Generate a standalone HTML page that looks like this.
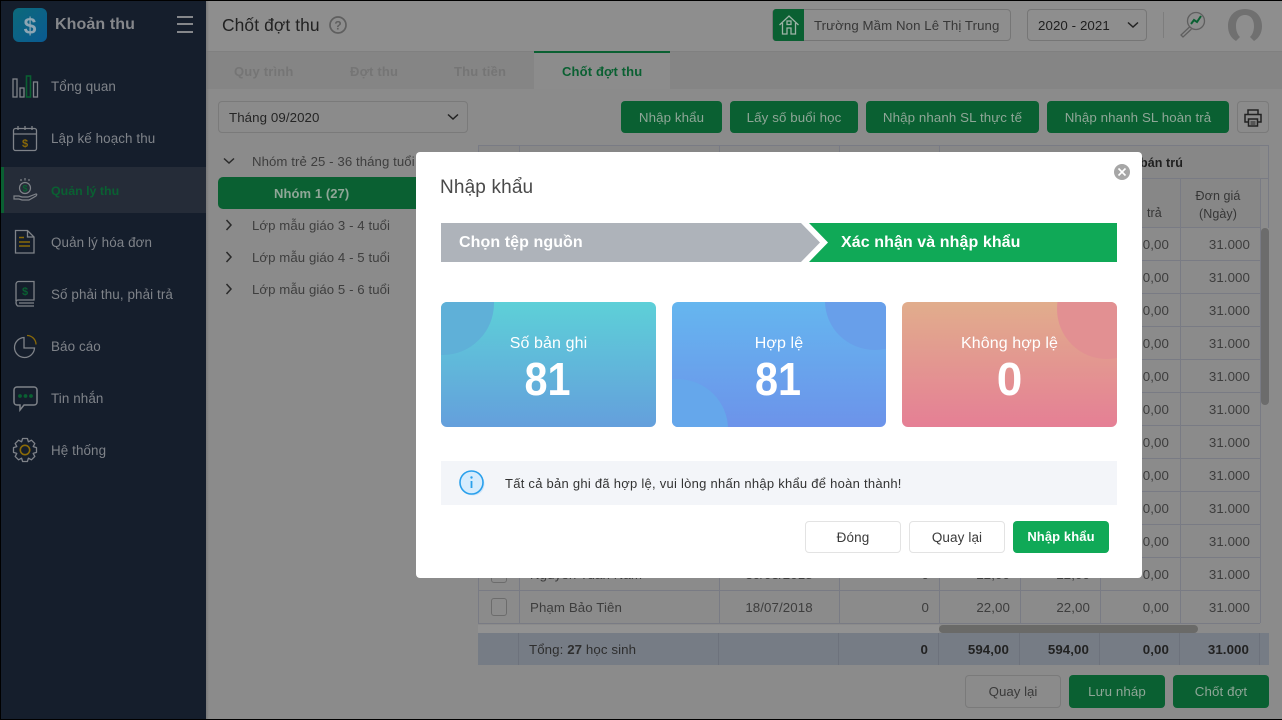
<!DOCTYPE html>
<html lang="vi"><head><meta charset="utf-8"><title>Chốt đợt thu</title>
<style>
*{box-sizing:border-box}
html,body{margin:0;padding:0;width:1282px;height:720px;overflow:hidden;background:#8b8b8b;font-family:"Liberation Sans",sans-serif}
.a{position:absolute}
.t{position:absolute;white-space:nowrap;line-height:20px;font-size:13.3px;letter-spacing:.08px;margin-top:1px}
.c{transform:translateX(-50%)}
.r{transform:translateX(-100%)}
.side{color:#7f8389;font-size:13.4px;letter-spacing:.1px;margin-top:1px}
.gb{position:absolute;background:#0a6032;border-radius:4px;color:#8fa697;font-size:13.3px;text-align:center;letter-spacing:.1px}
.wb{position:absolute;border:1px solid #7a7a7a;border-radius:4px;color:#333}
.tree{color:#3e3e3e;font-size:13.2px}
.v{position:absolute;background:#797b84;width:1px}
.h{position:absolute;background:#797b84;height:1px}
.cell{color:#3d3d3d}
.card{position:absolute;top:302px;height:125px;border-radius:6px;overflow:hidden;color:#fff;text-align:center}
.card b{position:absolute;left:0;right:0;top:52px;font-size:46px;line-height:50px;transform:translateX(-1px) scaleX(.9)}
.card span{position:absolute;left:0;right:0;top:32px;font-size:16px;line-height:20px;letter-spacing:.1px}
.card i{position:absolute;display:block}
.mb{position:absolute;top:521px;height:32px;border-radius:4px;text-align:center;line-height:31px;font-size:13.5px;letter-spacing:.1px}
</style></head><body>

<!-- top bar -->
<div class="a" style="left:206px;top:0;width:1076px;height:51px;background:#8e8e8e"></div>
<div class="a" style="left:206px;top:51px;width:1076px;height:38px;background:#858585"></div>
<div class="a" style="left:206px;top:51px;width:1076px;height:1px;background:#808080"></div>
<div class="t" style="left:222px;top:14px;font-size:17.4px;color:#222;letter-spacing:.1px">Chốt đợt thu</div>
<svg class="a" style="left:328px;top:15px" width="20" height="20"><circle cx="10" cy="10" r="8" fill="none" stroke="#5f5f5f" stroke-width="1.7"/><text x="10" y="14.5" text-anchor="middle" font-size="12" font-weight="700" fill="#5f5f5f" font-family="Liberation Sans">?</text></svg>

<div class="a" style="left:772px;top:9px;width:239px;height:32px;border:1px solid #767676;border-radius:4px"></div>
<div class="a" style="left:773px;top:9px;width:31px;height:32px;background:#0a6032;border-radius:3px 0 0 3px"></div>
<svg class="a" style="left:778px;top:14px" width="22" height="22" fill="none" stroke="#9db3a6" stroke-width="1.3"><path d="M1.5 11 11 2l9.5 9M4.5 9v11h4.5v-6h4v6h4.5V9"/><rect x="9" y="7" width="4" height="3.5"/></svg>
<div class="t" style="left:814px;top:15px;color:#383838;font-size:13.25px">Trường Mầm Non Lê Thị Trung</div>

<div class="a" style="left:1027px;top:9px;width:120px;height:32px;border:1px solid #767676;border-radius:4px"></div>
<div class="t" style="left:1038px;top:15px;color:#1f1f1f">2020 - 2021</div>
<svg class="a" style="left:1126px;top:20px" width="14" height="10" fill="none" stroke="#222" stroke-width="1.5"><path d="M2 2.5 7 7l5-4.5"/></svg>
<div class="a" style="left:1163px;top:12px;width:1px;height:26px;background:#7d7d7d"></div>
<svg class="a" style="left:1178px;top:9px" width="32" height="30" fill="none"><circle cx="18" cy="12" r="8.5" stroke="#5f5f5f" stroke-width="1.3"/><path d="M13 15l3-4 3 2 4-6" stroke="#0a6032" stroke-width="2"/><path d="M11.5 18 3 26l2 2 8.5-8" stroke="#5f5f5f" stroke-width="1.3"/></svg>
<svg class="a" style="left:1227px;top:8px" width="36" height="35"><path d="M18 1C8 1 1 8 1 18c0 7 3 12 8 15l4-4c-3-3-4-7-4-11 0-6 3-11 9-11s9 5 9 11c0 4-1 8-4 11l4 4c5-3 8-8 8-15C35 8 28 1 18 1z" fill="#707070"/></svg>

<!-- tabs -->
<div class="t" style="left:234px;top:61px;font-weight:700;color:#757575;font-size:13px;letter-spacing:.2px">Quy trình</div>
<div class="t" style="left:350px;top:61px;font-weight:700;color:#757575;font-size:13px;letter-spacing:.2px">Đợt thu</div>
<div class="t" style="left:454px;top:61px;font-weight:700;color:#757575;font-size:13px;letter-spacing:.2px">Thu tiền</div>
<div class="a" style="left:534px;top:51px;width:136px;height:38px;background:#8c8c8c;border-top:2px solid #0a6032"></div>
<div class="t" style="left:562px;top:61px;font-weight:700;color:#0a6032;font-size:13px;letter-spacing:.15px">Chốt đợt thu</div>

<!-- left select + tree -->
<div class="a" style="left:218px;top:101px;width:250px;height:32px;border:1px solid #7a7a7a;border-radius:4px"></div>
<div class="t" style="left:229px;top:107px;color:#252525">Tháng 09/2020</div>
<svg class="a" style="left:446px;top:112px" width="14" height="10" fill="none" stroke="#222" stroke-width="1.5"><path d="M2 2.5 7 7l5-4.5"/></svg>

<svg class="a" style="left:222px;top:156px" width="14" height="10" fill="none" stroke="#2a2a2a" stroke-width="1.5"><path d="M2 2.5 7 7l5-4.5"/></svg>
<div class="t tree" style="left:252px;top:151px">Nhóm trẻ 25 - 36 tháng tuổi</div>
<div class="a" style="left:218px;top:177px;width:210px;height:32px;background:#0a6032;border-radius:5px"></div>
<div class="t" style="left:274px;top:183px;color:#8fa697;font-weight:700;font-size:13px">Nhóm 1 (27)</div>
<svg class="a" style="left:224px;top:218px" width="10" height="14" fill="none" stroke="#2a2a2a" stroke-width="1.5"><path d="M2.5 2 7 7l-4.5 5"/></svg>
<div class="t tree" style="left:252px;top:215px">Lớp mẫu giáo 3 - 4 tuổi</div>
<svg class="a" style="left:224px;top:250px" width="10" height="14" fill="none" stroke="#2a2a2a" stroke-width="1.5"><path d="M2.5 2 7 7l-4.5 5"/></svg>
<div class="t tree" style="left:252px;top:247px">Lớp mẫu giáo 4 - 5 tuổi</div>
<svg class="a" style="left:224px;top:282px" width="10" height="14" fill="none" stroke="#2a2a2a" stroke-width="1.5"><path d="M2.5 2 7 7l-4.5 5"/></svg>
<div class="t tree" style="left:252px;top:279px">Lớp mẫu giáo 5 - 6 tuổi</div>

<!-- toolbar -->
<div class="gb" style="left:621px;top:101px;width:101px;height:32px;line-height:34px">Nhập khẩu</div>
<div class="gb" style="left:730px;top:101px;width:128px;height:32px;line-height:34px">Lấy số buổi học</div>
<div class="gb" style="left:866px;top:101px;width:173px;height:32px;line-height:34px">Nhập nhanh SL thực tế</div>
<div class="gb" style="left:1047px;top:101px;width:182px;height:32px;line-height:34px">Nhập nhanh SL hoàn trả</div>
<div class="wb" style="left:1237px;top:101px;width:32px;height:32px"></div>
<svg class="a" style="left:1243px;top:108px" width="20" height="20" fill="none" stroke="#222" stroke-width="1.5"><path d="M5 6V2h10v4M5 14H2V6.5h16V14h-3"/><rect x="5.5" y="11" width="9" height="7"/><path d="M7.5 14h5M7.5 16h5" stroke-width="1"/></svg>

<!-- table -->
<div class="a" style="left:478px;top:145px;width:782px;height:83px;background:#878787"></div>
<div class="h" style="left:478px;top:145px;width:791px"></div>
<div class="h" style="left:1142px;top:178px;width:127px"></div>
<div class="h" style="left:478px;top:227px;width:782px"></div>
<div class="v" style="left:1180px;top:178px;height:49px"></div>
<div class="v" style="left:1260px;top:178px;height:49px"></div>
<div class="v" style="left:1268px;top:145px;height:83px"></div>
<div class="v" style="left:478px;top:145px;height:7px"></div>
<div class="v" style="left:519px;top:145px;height:7px"></div>
<div class="v" style="left:719px;top:145px;height:7px"></div>
<div class="v" style="left:839px;top:145px;height:7px"></div>
<div class="v" style="left:939px;top:145px;height:7px"></div>
<div class="t" style="left:1140px;top:152px;font-weight:700;color:#1f1f1f;font-size:12.5px">bán trú</div>
<div class="t" style="left:1147px;top:202px;color:#363636;font-size:12.5px">trả</div>
<div class="t c" style="left:1218px;top:185px;color:#363636;font-size:12.5px">Đơn giá</div>
<div class="t c" style="left:1218px;top:203px;color:#363636;font-size:12.5px">(Ngày)</div>

<div class="v" style="left:1180px;top:227px;height:396px"></div>
<div class="v" style="left:1260px;top:227px;height:396px"></div>
<div class="h" style="left:1142px;top:260px;width:118px"></div>
<div class="h" style="left:1142px;top:293px;width:118px"></div>
<div class="h" style="left:1142px;top:326px;width:118px"></div>
<div class="h" style="left:1142px;top:359px;width:118px"></div>
<div class="h" style="left:1142px;top:392px;width:118px"></div>
<div class="h" style="left:1142px;top:425px;width:118px"></div>
<div class="h" style="left:1142px;top:458px;width:118px"></div>
<div class="h" style="left:1142px;top:491px;width:118px"></div>
<div class="h" style="left:1142px;top:524px;width:118px"></div>
<div class="h" style="left:1142px;top:557px;width:118px"></div>
<div class="h" style="left:478px;top:590px;width:782px"></div>
<div class="h" style="left:478px;top:623px;width:782px"></div>
<div class="v" style="left:478px;top:578px;height:46px"></div>
<div class="v" style="left:519px;top:578px;height:46px"></div>
<div class="v" style="left:719px;top:578px;height:46px"></div>
<div class="v" style="left:839px;top:578px;height:46px"></div>
<div class="v" style="left:939px;top:578px;height:46px"></div>
<div class="v" style="left:1020px;top:578px;height:46px"></div>
<div class="v" style="left:1100px;top:578px;height:46px"></div>

<div class="t cell r" style="left:1169px;top:234px">0,00</div><div class="t cell r" style="left:1250px;top:234px">31.000</div>
<div class="t cell r" style="left:1169px;top:267px">0,00</div><div class="t cell r" style="left:1250px;top:267px">31.000</div>
<div class="t cell r" style="left:1169px;top:300px">0,00</div><div class="t cell r" style="left:1250px;top:300px">31.000</div>
<div class="t cell r" style="left:1169px;top:333px">0,00</div><div class="t cell r" style="left:1250px;top:333px">31.000</div>
<div class="t cell r" style="left:1169px;top:366px">0,00</div><div class="t cell r" style="left:1250px;top:366px">31.000</div>
<div class="t cell r" style="left:1169px;top:399px">0,00</div><div class="t cell r" style="left:1250px;top:399px">31.000</div>
<div class="t cell r" style="left:1169px;top:432px">0,00</div><div class="t cell r" style="left:1250px;top:432px">31.000</div>
<div class="t cell r" style="left:1169px;top:465px">0,00</div><div class="t cell r" style="left:1250px;top:465px">31.000</div>
<div class="t cell r" style="left:1169px;top:498px">0,00</div><div class="t cell r" style="left:1250px;top:498px">31.000</div>
<div class="t cell r" style="left:1169px;top:531px">0,00</div><div class="t cell r" style="left:1250px;top:531px">31.000</div>
<div class="t cell r" style="left:1169px;top:564px">0,00</div><div class="t cell r" style="left:1250px;top:564px">31.000</div>
<div class="t cell r" style="left:1169px;top:597px">0,00</div><div class="t cell r" style="left:1250px;top:597px">31.000</div>

<!-- partial row -->
<div class="t cell" style="left:530px;top:564px">Nguyễn Tuấn Nam</div>
<div class="t cell c" style="left:779px;top:564px">30/03/2018</div>
<div class="t cell r" style="left:929px;top:564px">0</div>
<div class="t cell r" style="left:1010px;top:564px">22,00</div>
<div class="t cell r" style="left:1090px;top:564px">22,00</div>
<div class="a" style="left:491px;top:565px;width:16px;height:18px;border:1px solid #6c6c6c;border-radius:3px;background:#8c8c8c"></div>
<!-- last row -->
<div class="a" style="left:491px;top:598px;width:16px;height:18px;border:1px solid #6c6c6c;border-radius:3px;background:#8c8c8c"></div>
<div class="t cell" style="left:530px;top:597px">Phạm Bảo Tiên</div>
<div class="t cell c" style="left:779px;top:597px">18/07/2018</div>
<div class="t cell r" style="left:929px;top:597px">0</div>
<div class="t cell r" style="left:1010px;top:597px">22,00</div>
<div class="t cell r" style="left:1090px;top:597px">22,00</div>

<!-- scrollbars -->
<div class="a" style="left:1261px;top:228px;width:8px;height:177px;background:#6c6c6c;border-radius:4px"></div>
<div class="a" style="left:478px;top:625px;width:461px;height:8px;background:#929292"></div>
<div class="a" style="left:939px;top:625px;width:259px;height:8px;background:#6a6a68;border-radius:4px"></div>

<!-- totals -->
<div class="a" style="left:478px;top:633px;width:791px;height:32px;background:#767c85"></div>
<div class="v" style="left:518px;top:633px;height:32px;background:#6d727c"></div>
<div class="v" style="left:718px;top:633px;height:32px;background:#6d727c"></div>
<div class="v" style="left:838px;top:633px;height:32px;background:#6d727c"></div>
<div class="v" style="left:938px;top:633px;height:32px;background:#6d727c"></div>
<div class="v" style="left:1019px;top:633px;height:32px;background:#6d727c"></div>
<div class="v" style="left:1099px;top:633px;height:32px;background:#6d727c"></div>
<div class="v" style="left:1179px;top:633px;height:32px;background:#6d727c"></div>
<div class="v" style="left:1259px;top:633px;height:32px;background:#6d727c"></div>
<div class="t" style="left:529px;top:639px;color:#2e2e2e">Tổng: <b>27</b> học sinh</div>
<div class="t r" style="left:928px;top:639px;color:#222;font-weight:700">0</div>
<div class="t r" style="left:1009px;top:639px;color:#222;font-weight:700">594,00</div>
<div class="t r" style="left:1089px;top:639px;color:#222;font-weight:700">594,00</div>
<div class="t r" style="left:1169px;top:639px;color:#222;font-weight:700">0,00</div>
<div class="t r" style="left:1249px;top:639px;color:#222;font-weight:700">31.000</div>

<!-- bottom buttons -->
<div class="wb" style="left:965px;top:675px;width:96px;height:33px;text-align:center;line-height:31px;font-size:13.3px;color:#3a3a3a">Quay lại</div>
<div class="gb" style="left:1069px;top:675px;width:96px;height:33px;line-height:33px">Lưu nháp</div>
<div class="gb" style="left:1173px;top:675px;width:96px;height:33px;line-height:33px">Chốt đợt</div>

<!-- sidebar -->
<div class="a" style="left:0;top:0;width:206px;height:720px;background:#151e2c"></div>
<div class="a" style="left:206px;top:0;width:3px;height:720px;background:linear-gradient(90deg,#787878,#8b8b8b00)"></div>
<div class="a" style="left:13px;top:8px;width:34px;height:34px;border-radius:6px;background:linear-gradient(135deg,#0d6a7a,#0a5a92)"></div>
<div class="t" style="left:13px;top:15px;width:34px;text-align:center;color:#8ea6b4;font-weight:700;font-size:23px;line-height:22px;margin-top:0">$</div>
<div class="t" style="left:55px;top:15px;color:#85878b;font-size:16px;font-weight:700;letter-spacing:.1px;margin-top:0">Khoản thu</div>
<div class="a" style="left:177px;top:16px;width:16px;height:2px;background:#85878b"></div>
<div class="a" style="left:177px;top:23px;width:16px;height:2px;background:#85878b"></div>
<div class="a" style="left:177px;top:31px;width:16px;height:2px;background:#85878b"></div>

<svg class="a" style="left:12px;top:75px" width="28" height="23" fill="none" stroke="#7f8389" stroke-width="1.3"><rect x="1" y="4" width="4" height="18"/><rect x="8" y="13" width="4" height="9"/><rect x="14.5" y="1" width="4" height="21" stroke="#0a6032" stroke-width="1.6"/><rect x="21.5" y="7" width="4" height="15"/></svg>
<div class="t side" style="left:51px;top:76px">Tổng quan</div>

<svg class="a" style="left:12px;top:125px" width="27" height="27" fill="none" stroke="#7f8389" stroke-width="1.3"><rect x="1.5" y="3.5" width="23" height="22" rx="2"/><path d="M1.5 9h23M6 1v4M13 1v4M20 1v4"/><text x="13" y="22" font-size="11" font-weight="700" text-anchor="middle" fill="#8a6a08" stroke="none" font-family="Liberation Sans">$</text></svg>
<div class="t side" style="left:51px;top:128px">Lập kế hoạch thu</div>

<div class="a" style="left:1px;top:167px;width:205px;height:46px;background:#252c38"></div>
<div class="a" style="left:1px;top:167px;width:3px;height:46px;background:#0a6032"></div>
<svg class="a" style="left:13px;top:177px" width="26" height="26" fill="none" stroke="#7f8389" stroke-width="1.2"><circle cx="12" cy="11" r="5.5"/><text x="12" y="14.5" font-size="9" font-weight="700" text-anchor="middle" fill="#0a6032" stroke="none" font-family="Liberation Sans">$</text><path d="M8 2v2M12 1v2.5M16 2v2"/><path d="M1 19h5l3 1h6l8-3c1 0 1 1 0 2l-7 4H9l-3-1H1z"/></svg>
<div class="t side" style="left:51px;top:180px;color:#0a6032;font-weight:700;font-size:12.4px;letter-spacing:0">Quản lý thu</div>

<svg class="a" style="left:14px;top:229px" width="22" height="26" fill="none" stroke="#7f8389" stroke-width="1.3"><path d="M1.5 1.5h12l6.5 6.5v16H1.5z"/><path d="M13.5 1.5V8H20"/><path d="M5 8.5h5M5 13h11M5 17h11" stroke="#8a6a08" stroke-width="1.4"/></svg>
<div class="t side" style="left:51px;top:232px">Quản lý hóa đơn</div>

<svg class="a" style="left:14px;top:280px" width="22" height="28" fill="none" stroke="#7f8389" stroke-width="1.3"><path d="M2 21V4c0-1 1-2.5 2.5-2.5H20V20H4c-1 0-2 1-2 2.5S3 26 4 26h16M5 23h15"/><text x="11" y="15" font-size="11" font-weight="700" text-anchor="middle" fill="#0a6032" stroke="none" font-family="Liberation Sans">$</text></svg>
<div class="t side" style="left:51px;top:284px">Số phải thu, phải trả</div>

<svg class="a" style="left:13px;top:334px" width="25" height="25" fill="none" stroke="#7f8389" stroke-width="1.3"><path d="M11 3.5a10 10 0 1 0 10.5 10.5H11z"/><path d="M14 1.5a9 9 0 0 1 9 9" stroke="#8a6a08"/></svg>
<div class="t side" style="left:51px;top:336px">Báo cáo</div>

<svg class="a" style="left:13px;top:386px" width="25" height="26" fill="none" stroke="#7f8389" stroke-width="1.5"><path d="M4 1h17c1.5 0 3 1 3 3v12c0 2-1.5 3-3 3H11l-4 5v-5H4c-1.5 0-3-1-3-3V4c0-2 1.5-3 3-3z"/><circle cx="7" cy="10" r="1.9" fill="#0a6032" stroke="none"/><circle cx="12.5" cy="10" r="1.9" fill="#0a6032" stroke="none"/><circle cx="18" cy="10" r="1.9" fill="#0a6032" stroke="none"/></svg>
<div class="t side" style="left:51px;top:388px">Tin nhắn</div>

<svg class="a" style="left:12px;top:437px" width="26" height="26" fill="none" stroke="#7f8389" stroke-width="1.3" stroke-linejoin="round"><path transform="translate(13 13)" d="M11.5 -2.4 11.5 2.4 8.2 3.4 9.83 6.43 6.43 9.83 3.4 8.2 2.4 11.5 -2.4 11.5 -3.4 8.2 -6.43 9.83 -9.83 6.43 -8.2 3.4 -11.5 2.4 -11.5 -2.4 -8.2 -3.4 -9.83 -6.43 -6.43 -9.83 -3.4 -8.2 -2.4 -11.5 2.4 -11.5 3.4 -8.2 6.43 -9.83 9.83 -6.43 8.2 -3.4Z"/><circle cx="13" cy="13" r="4.7" stroke="#8a6a08" stroke-width="1.6"/></svg>
<div class="t side" style="left:51px;top:440px">Hệ thống</div>

<!-- modal -->
<div class="a" style="left:416px;top:152px;width:726px;height:426px;background:#fff;border-radius:4px"></div>
<div class="t" style="left:440px;top:178px;font-size:19px;color:#4a4a4a;letter-spacing:.15px;margin-top:0">Nhập khẩu</div>
<svg class="a" style="left:1113px;top:163px" width="18" height="18"><circle cx="9" cy="9" r="8" fill="#a6a6a6"/><path d="M5.5 5.5l7 7M12.5 5.5l-7 7" stroke="#fff" stroke-width="1.6"/></svg>

<svg class="a" style="left:441px;top:223px" width="676" height="39"><polygon points="0,0 360,0 379,19.5 360,39 0,39" fill="#aeb3ba"/><polygon points="368,0 676,0 676,39 368,39 387,19.5" fill="#10a957"/></svg>
<div class="t" style="left:459px;top:232px;color:#fff;font-weight:700;font-size:16px">Chọn tệp nguồn</div>
<div class="t" style="left:841px;top:232px;color:#fff;font-weight:700;font-size:16px">Xác nhận và nhập khẩu</div>

<div class="card" style="left:441px;width:215px;background:linear-gradient(180deg,#5dd0d8,#649fdc)">
<i style="left:-50px;top:-50px;width:103px;height:103px;border-radius:50%;background:#5fb0d8"></i>
<span>Số bản ghi</span><b>81</b></div>
<div class="card" style="left:672px;width:214px;background:linear-gradient(180deg,#65b6ef,#6c93ea)">
<i style="left:153px;top:-50px;width:100px;height:98px;border-radius:50%;background:#689fea"></i>
<i style="left:-46px;top:77px;width:102px;height:100px;border-radius:50%;background:#65a7eb"></i>
<span>Hợp lệ</span><b>81</b></div>
<div class="card" style="left:902px;width:215px;background:linear-gradient(180deg,#e1ad8c,#e57f95)">
<i style="left:155px;top:-43px;width:100px;height:100px;border-radius:50%;background:#e29092"></i>
<span>Không hợp lệ</span><b style="transform:none">0</b></div>

<div class="a" style="left:441px;top:461px;width:676px;height:44px;background:#f3f5f9"></div>
<svg class="a" style="left:458px;top:469px" width="28" height="28"><circle cx="15" cy="15" r="11.5" fill="#cfe5fa"/><circle cx="13.5" cy="13.5" r="11.5" fill="#d6ecfd" stroke="#2aa0ec" stroke-width="1.6"/><circle cx="13.5" cy="8.5" r="1.2" fill="#2aa0ec"/><path d="M13.5 12v7" stroke="#2aa0ec" stroke-width="1.8"/></svg>
<div class="t" style="left:505px;top:473px;font-size:13px;color:#333;letter-spacing:.26px">Tất cả bản ghi đã hợp lệ, vui lòng nhấn nhập khẩu để hoàn thành!</div>

<div class="mb" style="left:805px;width:96px;border:1px solid #e3e3e3;color:#3b3b3b">Đóng</div>
<div class="mb" style="left:909px;width:96px;border:1px solid #e3e3e3;color:#3b3b3b">Quay lại</div>
<div class="mb" style="left:1013px;width:96px;background:#10a957;color:#fff;font-weight:700;line-height:32px;font-size:13px">Nhập khẩu</div>

<!-- frame -->
<div class="a" style="left:0;top:0;width:1282px;height:1px;background:#000"></div>
<div class="a" style="left:0;top:719px;width:1282px;height:1px;background:#000"></div>
<div class="a" style="left:0;top:0;width:1px;height:720px;background:#000"></div>
</body></html>
